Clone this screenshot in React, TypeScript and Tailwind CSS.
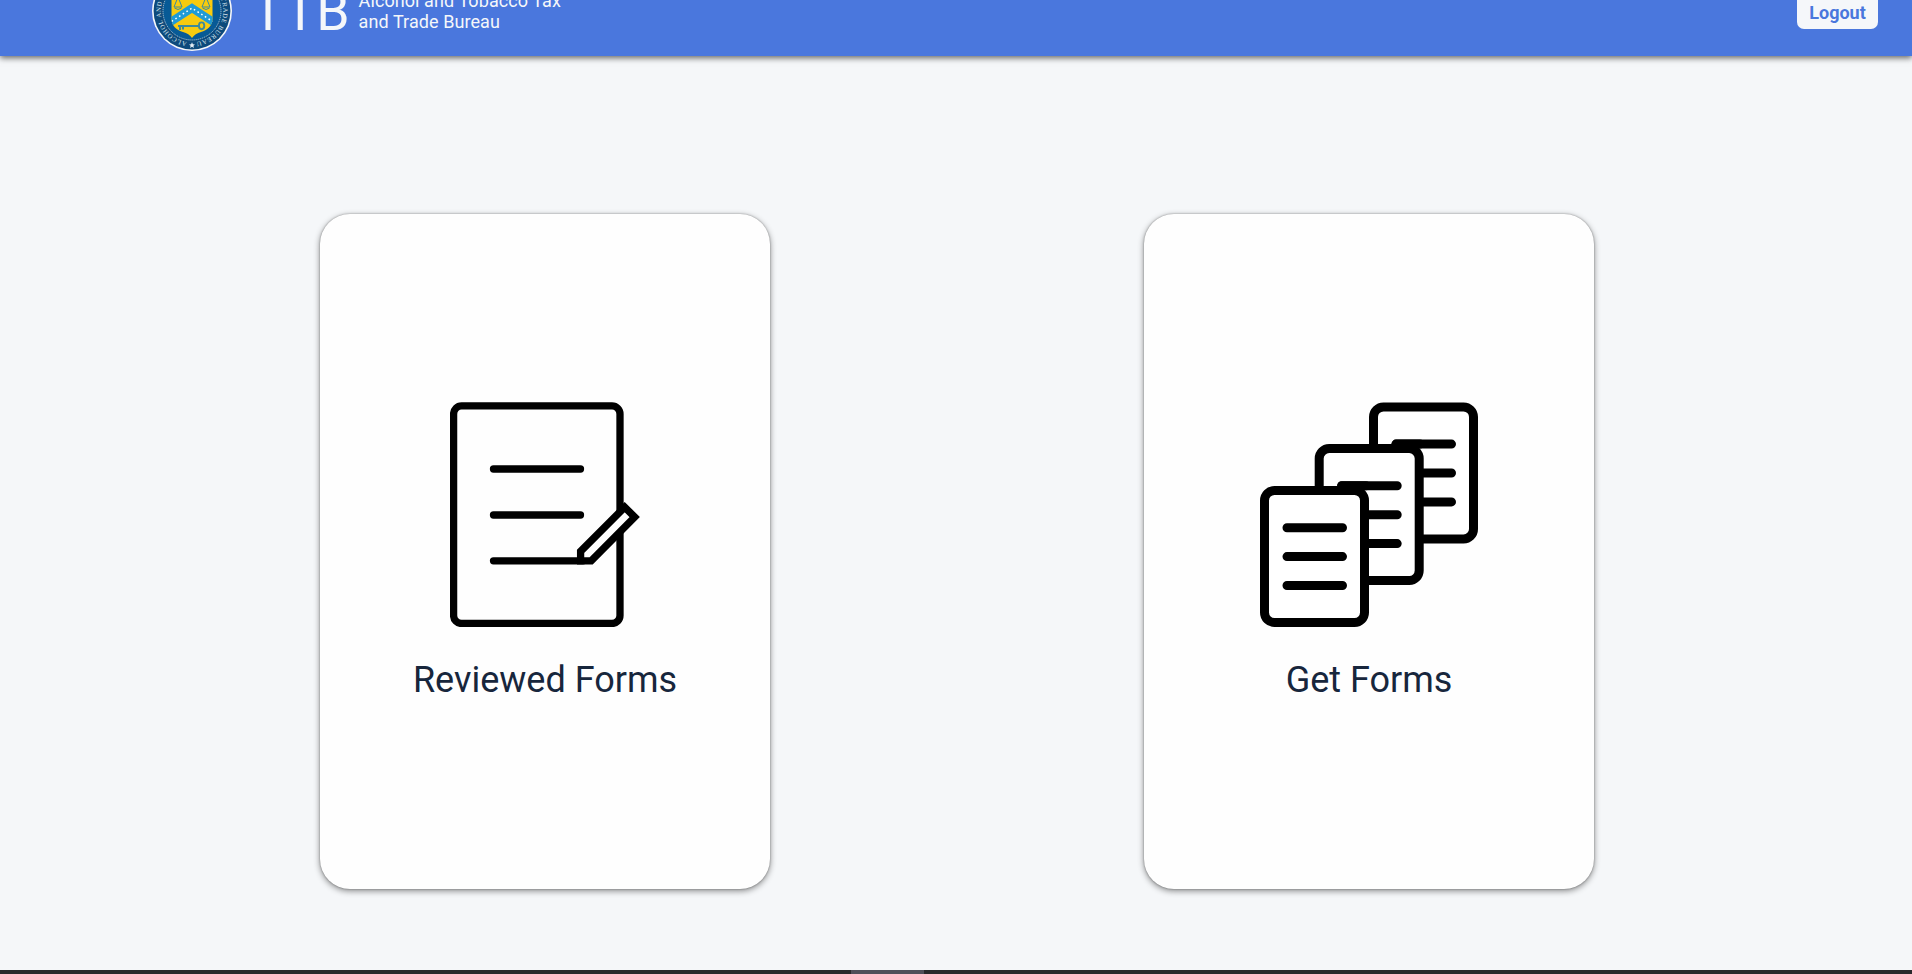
import React from "react";

function Seal() {
  return (
    <svg width="82" height="82" viewBox="-41 -41 82 82" className="shrink-0">
      <defs>
        <path id="ring" d="M0,31.3 A31.3,31.3 0 0 1 0,-31.3 A31.3,31.3 0 0 1 0,31.3" />
        <clipPath id="shieldClip">
          <path d="M-20.5,-24 H20.5 V8 C20.5,15 15,19.5 9,21 C5,22 2,24 0,27 C-2,24 -5,22 -9,21 C-15,19.5 -20.5,15 -20.5,8 Z" />
        </clipPath>
      </defs>
      <circle r="40" fill="#f5f7f9" />
      <circle r="38.4" fill="#0d4a7c" />
      <circle r="29" fill="#075a96" stroke="#b9cfdf" strokeWidth="0.9" strokeDasharray="1.2 0.8" />
      <text fill="#dbe6ee" fontSize="6.6" fontFamily="Liberation Serif, serif">
        <textPath href="#ring" startOffset="5" textLength="187">
          ALCOHOL AND TOBACCO TAX AND TRADE BUREAU
        </textPath>
      </text>
      <path d="M0,31.2 L0.9,33.3 L3,33.4 L1.4,34.8 L1.9,36.9 L0,35.7 L-1.9,36.9 L-1.4,34.8 L-3,33.4 L-0.9,33.3 Z" fill="#e4edf4" />
      <g clipPath="url(#shieldClip)">
        <rect x="-21" y="-24" width="42" height="52" fill="#f8cb0e" />
        <path d="M-24,12.7 L0,-2.9 L24,12.7" fill="none" stroke="#1f9bd6" strokeWidth="8" />
        <path d="M-24,12.7 L0,-2.9 L24,12.7" fill="none" stroke="#fff" strokeWidth="1.5" strokeDasharray="1.6 2.8" />
      </g>
      <g fill="none" stroke="#3d8a9c">
        <path d="M-14,15 H6.5 M-12,15 v4 M-9,15 v3.4" strokeWidth="2" />
        <ellipse cx="9.6" cy="14.8" rx="2.7" ry="3.4" strokeWidth="1.9" />
        <path d="M-14,-14 L-18,-4 H-10 Z M-17.5,-3 Q-14,0 -10.5,-3 M14,-14 L10,-4 H18 Z M10.5,-3 Q14,0 17.5,-3" strokeWidth="1" />
      </g>
    </svg>
  );
}

function ReviewedIcon() {
  return (
    <svg width="190" height="225" viewBox="0 0 190 225" fill="none" stroke="#000" strokeWidth="7.3">
      <rect x="3.6" y="3.9" width="166.4" height="217.6" rx="8" />
      <path d="M43.5 67H130.5M43.5 113H130.5M43.5 158.8H133" strokeLinecap="round" />
      <path d="M130.6 158.8V149.3L174.7 105.1L184.7 115.1L141.2 158.8Z" fill="#fff" />
    </svg>
  );
}

function Sheet({ x, y }: { x: number; y: number }) {
  return (
    <g transform={`translate(${x} ${y})`}>
      <rect x="4.5" y="4.5" width="100" height="132" rx="10" fill="#fff" />
      <path d="M27 41.7H82.5M27 70.6H82.5M27 99.5H82.5" strokeLinecap="round" />
    </g>
  );
}

function GetIcon() {
  return (
    <svg width="218" height="225" viewBox="0 0 218 225" fill="none" stroke="#000" strokeWidth="9">
      <Sheet x={109} y={0.4} />
      <Sheet x={54.7} y={42.1} />
      <path d="M136 42.1H160" strokeLinecap="round" />
      <Sheet x={0} y={84} />
      <path d="M81.7 83.8H106" strokeLinecap="round" />
    </svg>
  );
}

function Card({ label, children }: { label: string; children: React.ReactNode }) {
  return (
    <button className="flex h-[675px] w-[450px] flex-col items-center rounded-[30px] bg-[#fefefe] pt-[188px] shadow-[0_2px_6px_rgba(0,0,0,0.45),0_0_2px_rgba(0,0,0,0.35)]">
      {children}
      <span className="mt-[32px] text-[36px] leading-[42px] text-[#17263c]">{label}</span>
    </button>
  );
}

export default function App() {
  return (
    <div className="flex h-[974px] flex-col overflow-hidden bg-[#f5f7f9] font-['Roboto',sans-serif]">
      <header className="flex h-[56px] shrink-0 items-end justify-between bg-[#4a77dd] pr-[34px] pl-[151px] text-[#f5f7fa] shadow-[0_2px_6px_rgba(0,0,0,0.6)]">
        <div className="flex items-end">
          <div className="mb-[4px]">
            <Seal />
          </div>
          <span className="mb-[12px] ml-[19px] text-[53.5px] leading-[64px]">TTB</span>
          <span className="mb-[24px] ml-[9px] text-[18px] leading-[21px] tracking-[0.08px]">
            Alcohol and Tobacco Tax
            <br />
            and Trade Bureau
          </span>
        </div>
        <button className="mb-[27px] h-[40px] w-[81px] rounded-[7px] bg-[#f5f7fa] pt-[6px] text-[18px] leading-[21px] font-bold text-[#4a77dd]">
          Logout
        </button>
      </header>
      <main className="flex grow gap-[374px] pt-[158px] pl-[320px]">
        <Card label="Reviewed Forms">
          <ReviewedIcon />
        </Card>
        <Card label="Get Forms">
          <GetIcon />
        </Card>
      </main>
      <footer className="flex h-[4px] shrink-0 bg-[#29292b] pl-[851px]">
        <div className="w-[73px] bg-[#504f59]" />
      </footer>
    </div>
  );
}
